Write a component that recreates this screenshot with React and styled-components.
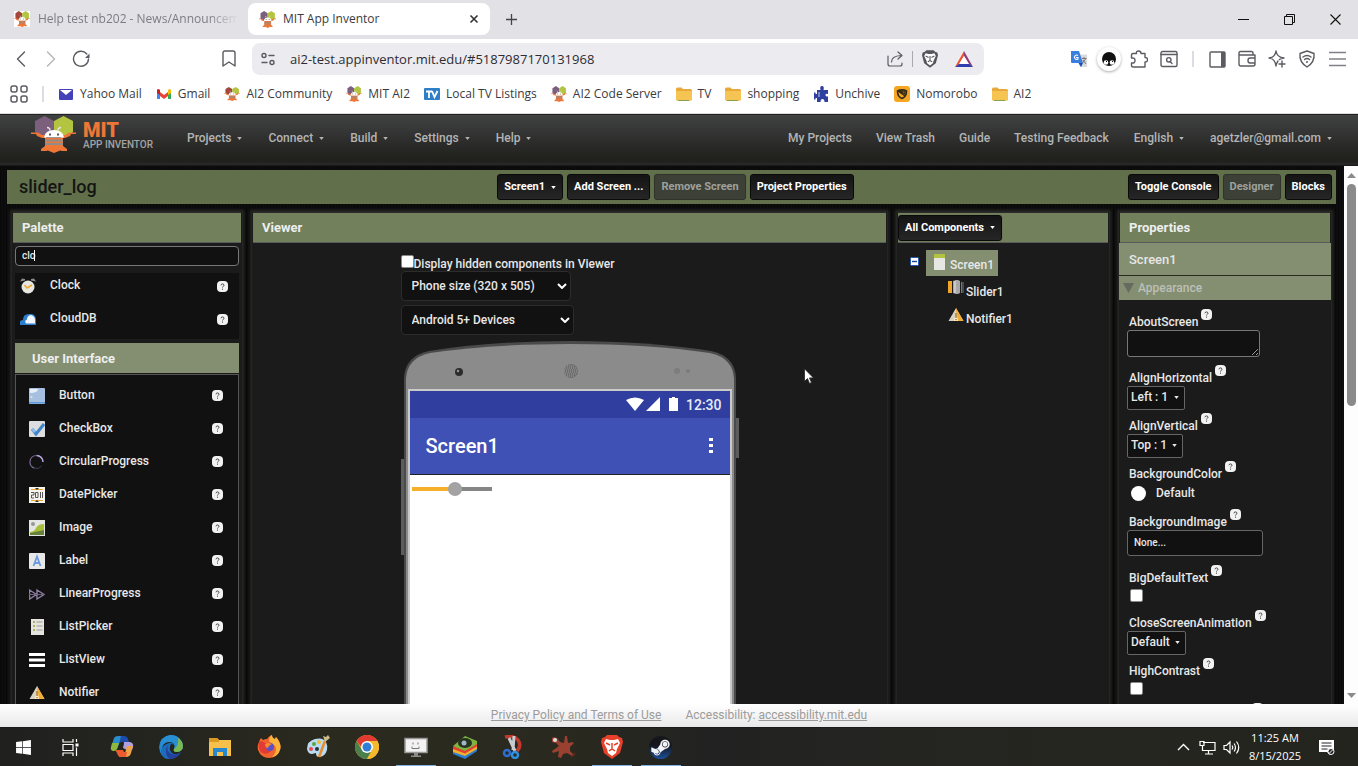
import React from "react";
import styled, { createGlobalStyle, css } from "styled-components";
import { FaWindows, FaSteamSymbol } from "react-icons/fa";

const ui = `"Open Sans", "Noto Sans", sans-serif`;
const app = `Roboto, "Liberation Sans", sans-serif`;

const Global = createGlobalStyle`
  * { box-sizing: border-box; }
  html, body, #root { height: 100%; }
  body { margin: 0; background: #0b0b0b; overflow: hidden; }
  svg { display: block; flex: none; }
  button { border: 0; margin: 0; padding: 0; background: none; font: inherit; color: inherit; white-space: nowrap; }
  a { color: inherit; text-decoration: none; white-space: nowrap; }
  input, select, textarea { margin: 0; font: inherit; color: inherit; }
`;

/* ---------- shared drawings ---------- */

const Svg = ({ w = 16, h = w, box = `0 0 ${w} ${h}`, children, ...rest }) => (
  <svg width={w} height={h} viewBox={box} fill="none" aria-hidden="true" {...rest}>{children}</svg>
);

const Caret = ({ size = 5 }) => (
  <Svg w={size} h={3} box="0 0 6 4"><path d="M0 0h6L3 4z" fill="currentColor" /></Svg>
);

const BeeIcon = ({ w = 18, h = w, boxed, wing = "#7c5f7c" }) => (
  <Svg w={w} h={h} box="0 0 45 37" preserveAspectRatio="none">
    {boxed && <path d="M0 0h45v37H0z" fill="#fff" />}
    <path d="M4 5l9.500-5L23 5v11l-5 4H9l-5-4z" fill={wing} />
    <path d="M23 5l9.500-5L42 5v11l-5 4h-9l-5-4z" fill="#b3c440" />
    <path d="M0 16.500h7l4 2.500h4v3h-4l-5-2-1-2H0zM45 16.500h-7L34 19h-4v3h4l5-2 1-2h5z" fill="#ee7636" />
    <path d="M14 22h18v8l4 3v2h-5q-2-1-3 0l-5 2-5-2q-1-1-3 0h-5v-2l4-3z" fill="#ee7636" />
    <path d="M14 24.500h18M14 28h18" stroke="#8d8d8d" strokeWidth="1.800" />
    <path d="M13 21.500q1-7.500 10-7.500t10 7.500z" fill="#fff" />
    <path d="M16 11.500q3 0 3 3M30 11.500q-3 0-3 3" stroke="#e6e6e6" strokeWidth="1.300" />
    <path d="M18 18.500h2M26 18.500h2" stroke="#555" strokeWidth="2" />
  </Svg>
);

const Help = () => (
  <Svg w={11} h={11} box="0 0 11 11">
    <rect x="0" y="0" width="11" height="11" rx="4" fill="#f2f2f2" />
    <path d="M4 4.300c0-1.900 3-1.800 3 0 0 1-1.400 1-1.500 2.200M5.500 7.600v1.100" stroke="#444" strokeWidth="1" />
  </Svg>
);

/* ---------- browser chrome ---------- */

const Window = styled.div`
  position: relative;
  display: flex;
  flex-direction: column;
  height: 100vh;
  min-height: 400px;
  font: 12px/16px ${ui};
`;

const TabStrip = styled.div`
  display: flex;
  align-items: flex-start;
  flex: none;
  height: 39px;
  padding-top: 3px;
  background: #e2e1e6;
  color: #3b3b40;
`;

const Tab = styled.div`
  display: flex;
  align-items: center;
  gap: ${p => (p.$active ? 7 : 8)}px;
  flex: none;
  width: ${p => (p.$active ? 242 : 234)}px;
  height: 32px;
  margin-left: ${p => (p.$active ? 8 : 6)}px;
  padding: 0 ${p => (p.$active ? 11 : 2)}px 0 ${p => (p.$active ? 11 : 8)}px;
  border-radius: 8px;
  background: ${p => (p.$active ? "#fff" : "transparent")};
  color: ${p => (p.$active ? "#3b3b40" : "#7c7c82")};
`;

const TabTitle = styled.span`
  flex: 1;
  overflow: hidden;
  white-space: nowrap;
  ${p => p.$fade && css`mask-image: linear-gradient(90deg, #000 85%, transparent);`}
`;

const NewTab = styled.button`
  display: grid;
  place-items: center;
  width: 42px;
  height: 32px;
`;

const WindowControls = styled.div`
  display: flex;
  margin-left: auto;
`;

const WindowButton = styled.button`
  display: grid;
  place-items: center;
  width: 46px;
  height: 32px;
`;

const NavBar = styled.div`
  display: flex;
  align-items: center;
  flex: none;
  height: 40px;
  padding: 0 6px;
  background: #fff;
  color: #5b5b62;
`;

const IconButton = styled.button`
  display: grid;
  place-items: center;
  flex: none;
  width: 30px;
  height: 30px;
  ${p => p.$raised && css`
    svg { box-sizing: content-box; padding: 5px; border-radius: 50%; box-shadow: 0 1px 3px #aaa; }
  `}
`;

const NavSpace = styled.span`
  flex: none;
  width: ${p => p.$w}px;
`;

const Address = styled.form`
  display: flex;
  align-items: center;
  flex: 1;
  height: 32px;
  margin-left: 8px;
  padding: 0 5px 0 8px;
  border-radius: 8px;
  background: #ecebf0;
`;

const AddressInput = styled.input`
  flex: 1;
  min-width: 0;
  padding: 0;
  margin-left: 14px;
  border: 0;
  outline: 0;
  background: none;
  color: #2c2c33;
  font-size: 13px;
`;

const Divider = styled.span`
  flex: none;
  width: ${p => (p.$thick ? 2 : 1)}px;
  height: 16px;
  margin: 0 ${p => p.$m}px;
  background: ${p => (p.$thick ? "#dcdce2" : "#a9a9b0")};
`;

const Bookmarks = styled.nav`
  display: flex;
  align-items: center;
  gap: 14px;
  flex: none;
  height: 35px;
  padding: 0 10px 5px;
  border-bottom: 1px solid #d9d9dc;
  background: #fff;
  color: #3b3b40;
`;

const Bookmark = styled.a`
  display: flex;
  align-items: center;
  gap: 6px;
`;

const Folder = () => (
  <Svg><path d="M0 3q0-1.500 1.500-1.500h4L7 3h7.500Q16 3 16 4.500V13q0 1.500-1.500 1.500h-13Q0 14.500 0 13z" fill="#e9a93a" /><path d="M0 5h16v8q0 1.500-1.500 1.500h-13Q0 14.500 0 13z" fill="#f6c453" /><path d="M2 14.500h11" stroke="#8aa14c" /></Svg>
);

const bookmarks = [
  ["Yahoo Mail", <Svg><rect x="1" y="3" width="14" height="11" rx="1" fill="#4340b8" /><path d="M2 4h12L8 9z" fill="#fff" /></Svg>],
  ["Gmail", <Svg><path d="M1 13V4l3 2v7z" fill="#4285f4" /><path d="M12 13V6l3-2v9z" fill="#34a853" /><path d="M4 6v4l4 3 4-3V6L8 9z" fill="#ea4335" /><path d="M1 4q1-2 3 0v5L1 7z" fill="#c5221f" /><path d="M15 4q-1-2-3 0v5l3-2z" fill="#fbbc04" /></Svg>],
  ["AI2 Community", <BeeIcon w={16} h={14} wing="#a3473c" />],
  ["MIT AI2", <BeeIcon w={16} />],
  ["Local TV Listings", <Svg><rect y="2" width="16" height="12" rx="1" fill="#2f7fc8" /><path d="M2 5.500h6M5 5.500V12M8 5l2.500 6L13.500 5" stroke="#fff" strokeWidth="1.800" /></Svg>],
  ["AI2 Code Server", <BeeIcon w={16} />],
  ["TV", <Folder />],
  ["shopping", <Folder />],
  ["Unchive", <Svg><path d="M4 4h3.500q-1-4 1.500-4t1.500 4H15v4q-2.500-1-2.500 1t2.500 1.500V16h-3.500q0-3-2-3t-2 3H4v-4H2.500v1.500H1V6.500h1.500V8H4z" fill="#2e3f9e" /><path d="M6 6v5" stroke="#8fa0e0" strokeWidth="1.500" /></Svg>],
  ["Nomorobo", <Svg><rect width="16" height="16" rx="3" fill="#f5a623" /><path d="M3.500 5q4.500-2.500 9 0 0 6-4.500 7.500Q3.500 11 3.500 5z" stroke="#332a16" strokeWidth="1.600" /><path d="M4 5l7 5M6 5h5v3z" stroke="#332a16" strokeWidth="1.300" /></Svg>],
  ["AI2", <Folder />],
];

/* ---------- App Inventor ---------- */

const AppHeader = styled.header`
  display: flex;
  align-items: center;
  flex: none;
  height: 52px;
  padding: 0 13px 5px 31px;
  background: linear-gradient(#404242, #20201d 44px, #20201d 47px, #2b2b29 49px, #161616);
  border-top: 1px solid #222;
  color: #b4b4b4;
  font: 500 12px/16px ${app};
`;

const Brand = styled.a`
  display: flex;
  align-items: center;
  align-self: flex-start;
  gap: 7px;
  margin: 1px 21px 0 0;
`;

const BrandText = styled.span`
  display: flex;
  flex-direction: column;
  font: 500 10px/10px ${app};
  color: #a3a3a3;
`;

const BrandName = styled.strong`
  font: 900 20px/20px ${app};
  color: #ee7636;
`;

const MenuButton = styled.button`
  display: flex;
  align-items: center;
  gap: 6px;
  padding: 0 13px;
`;

const HeaderLink = styled.a`
  padding: 0 12px;
`;

const Push = styled.span`
  margin-left: auto;
`;

const Body = styled.div`
  display: flex;
  flex: 1;
  min-height: 0;
`;

const Workspace = styled.main`
  display: flex;
  flex-direction: column;
  flex: 1;
  min-width: 0;
  padding: 4px 8px 0 7px;
  overflow: hidden;
  background: repeating-linear-gradient(90deg, #0006 0 1px, transparent 1px 3px), #0d0d0d;
  color: #e8e8e8;
  font: 500 12px/16px ${app};
`;

const ProjectBar = styled.div`
  display: grid;
  grid-template-columns: 1fr auto 1fr;
  align-items: center;
  flex: none;
  height: 34px;
  padding: 0 4px 0 12px;
  background: #61704a;
`;

const ProjectName = styled.h1`
  margin: 0;
  font: 500 18px/24px ${app};
  color: #141414;
`;

const ButtonGroup = styled.div`
  display: flex;
  gap: 4px;
  justify-content: flex-end;
`;

const ToolButton = styled.button`
  display: flex;
  align-items: center;
  gap: 6px;
  height: 26px;
  padding: 0 6px;
  border: 1px solid #0a0a0a;
  border-radius: 3px;
  background: linear-gradient(#141414, #262626);
  box-shadow: 0 0 1px #555;
  color: #fff;
  font: 700 11px/16px ${app};
  &:disabled { background: #3c4036; border-color: #2f332a; color: #9fa09c; }
`;

const Columns = styled.div`
  display: flex;
  gap: 10px;
  flex: 1;
  min-height: 0;
  padding: 8px 5px 0;
`;

const Panel = styled.section`
  display: flex;
  flex-direction: column;
  flex: ${p => (p.$width ? `0 0 ${p.$width}px` : "1 1 0")};
  min-width: 0;
  background: #1b1b1b;
  box-shadow: 0 0 3px 2px #2b2b29;
`;

const PanelHead = styled.h2`
  display: flex;
  align-items: center;
  flex: none;
  height: 31px;
  margin: 0 1px;
  padding: ${p => (p.$tight ? "0" : "0 9px")};
  background: #72805c;
  border-bottom: 1px solid #5a5a5a;
  border-top: 1px solid #2b2b29;
  color: #eee;
  font: 700 13px/16px ${app};
`;

/* palette */

const SearchBox = styled.label`
  position: relative;
  display: block;
  flex: none;
  margin: 3px 3px 7px;
`;

const SearchInput = styled.input`
  display: block;
  width: 100%;
  height: 20px;
  padding: 0 6px 2px;
  border: 1px solid #777;
  border-radius: 4px;
  background: #111;
  font-size: 10px;
  outline: 0;
`;

const TextCursor = styled.span`
  position: absolute;
  left: 19px;
  top: 4px;
  width: 1px;
  height: 11px;
  background: #fff;
`;

const ItemList = styled.ul`
  flex: none;
  margin: 0 3px;
  padding: 0;
  list-style: none;
  background: #111;
  ${p => p.$framed && css`
    margin-top: 1px;
    padding: 4px 4px 0 8px;
    border: 1px solid #555;
  `}
`;

const Item = styled.li`
  display: flex;
  align-items: center;
  height: 33px;
  padding: 0 11px 0 5px;
  ${p => !p.$indent && css`padding-bottom: 7px;`}
`;

const ItemName = styled.span`
  flex: 1;
  margin-left: 14px;
  padding-bottom: 2px;
`;

const HelpButton = styled.button`
  flex: none;
`;

const CategoryHead = styled.h3`
  display: flex;
  align-items: center;
  flex: none;
  height: 30px;
  margin: 4px 3px 0;
  padding: 2px 17px 0;
  background: #838f70;
  font: 700 13px/16px ${app};
  color: #eee;
`;

const results = [
  ["Clock", <Svg><path d="M0 3.500L2 .5 5 1v1.500zM16 3.500L14 .5l-3 .5v1.500z" fill="#8c8c8c" /><circle cx="8" cy="9" r="6.500" fill="#e8e6e0" /><path d="M4.500 7L7 10l5-3" stroke="#f0a531" strokeWidth="1.500" /></Svg>],
  ["CloudDB", <Svg><path d="M0 14v-3q0-2 3-2 0-6 6-6h3q4 1 4 6v5z" fill="#2b7fd0" /><path d="M6 12.500q-2-3 1-4 0-4 4-4.500 4 1 4 5v3.500z" fill="#f4f8fc" /></Svg>],
];

const components = [
  ["Button", <Svg><rect width="16" height="16" rx="1" fill="#a7c0e0" /><path d="M1 1h8q0 4-8 4z" fill="#e6eef8" /><path d="M0 14h16v1.500H0z" fill="#5b9bdc" /><circle cx="2.500" cy="9" r="1" fill="#dbe8f6" /></Svg>],
  ["CheckBox", <Svg><rect width="16" height="16" rx="1" fill="#dedede" /><path d="M3 8l4 5 8-10" stroke="#3f86c9" strokeWidth="3" /><path d="M3 8l3 3" stroke="#8ebbe8" strokeWidth="3" /></Svg>],
  ["CircularProgress", <Svg><path d="M7.500 1.500A6.500 6.500 0 0 1 14 8" stroke="#bba7e0" strokeWidth="1.500" /><path d="M7.500 1.500A6.500 6.500 0 0 0 5.500 14.200" stroke="#7c6c95" strokeWidth="1.200" /><path d="M5.500 14.200a6.500 6.500 0 0 0 7-2" stroke="#443c50" /></Svg>],
  ["DatePicker", <Svg><path d="M0 0h16v16H0z" fill="#f5f3ee" /><path d="M2 2.500h12M2 13.500h12" stroke="#f0a531" /><path d="M6 1h4L8 3zM6 15h4L8 13z" fill="#333" /><path d="M2 5.500h3V8H2.500v3H5M6.500 5.500h2.500v5H6.500zM11.500 5v6M13.500 5v6" stroke="#555" /></Svg>],
  ["Image", <Svg><path d="M0 0h16v16H0z" fill="#e4e6e4" /><circle cx="4" cy="4" r="2" fill="#999" /><path d="M1 12q4 0 6-4t8-4v11H1z" fill="#a9bf3a" /><path d="M1 13q5-1 14-3v5H1z" fill="#64803c" /></Svg>],
  ["Label", <Svg><rect width="16" height="16" rx="1" fill="#e8e8e8" /><path d="M4.500 13L8 3.500 11.500 13M5.700 10h4.600" stroke="#6b9be0" strokeWidth="1.800" /></Svg>],
  ["LinearProgress", <Svg><path d="M.5 4l7 4.500-7 4.500zM8 4l7 4.500L8 13z" stroke="#8d7d9e" strokeWidth="1.400" /><path d="M0 8.500h16" stroke="#6d6080" /></Svg>],
  ["ListPicker", <Svg><path d="M2 0h13v16H2z" fill="#e6e4df" /><path d="M4 3h2M4 7h2M4 11h2" stroke="#93a43a" strokeWidth="1.600" /><path d="M7.500 3h6M7.500 7h6M7.500 11h6" stroke="#999" /></Svg>],
  ["ListView", <Svg><path d="M0 2.500h16M0 8h16M0 13.500h16" stroke="#fff" strokeWidth="3" /></Svg>],
  ["Notifier", <Warning />],
];

function Warning() {
  return <Svg><path d="M8 1l7.500 13H.5z" fill="#d9d2c2" /><path d="M8 1l7.500 13H8z" fill="#f2ad35" /><path d="M8 4l2 10H6z" fill="#fff1cf" /><path d="M8 6v5M8 12v1.300" stroke="#8d5c18" strokeWidth="1.200" /></Svg>;
}

/* viewer */

const ViewerBody = styled.div`
  width: 338px;
  margin: 12px auto 0;
`;

const CheckRow = styled.label`
  display: flex;
  align-items: flex-start;
  height: 16px;
  line-height: 19px;
`;

const Check = styled.input.attrs({ type: "checkbox" })`
  flex: none;
  width: 13px;
  height: 13px;
  appearance: none;
  border: 1px solid #888;
  border-radius: 2px;
  background: #fff;
`;

const SelectWrap = styled.span`
  position: relative;
  display: block;
  width: ${p => (p.$width ? `${p.$width}px` : "max-content")};
  svg { position: absolute; right: ${p => (p.$small ? 6 : 4)}px; top: ${p => (p.$small ? 10 : 12)}px; pointer-events: none; }
`;

const SizeSelect = styled.select`
  display: block;
  appearance: none;
  width: 100%;
  height: 30px;
  margin-bottom: 4px;
  padding: 0 20px 0 10px;
  border: 1px solid #2c2c2c;
  border-radius: 4px;
  background: #111;
`;

const Phone = styled.div`
  position: relative;
  height: 600px;
  margin-top: 5px;
  padding: 49px 7px 0;
`;

const PhoneFrame = styled.svg`
  position: absolute;
  inset: 0;
`;

const PhoneScreen = styled.div`
  position: relative;
  height: 509px;
  border: 2px solid #cacaca;
  background: #fff;
`;

const StatusBar = styled.div`
  display: flex;
  align-items: center;
  justify-content: flex-end;
  gap: 1px;
  height: 27px;
  padding-right: 8px;
  background: #303f9f;
  color: #e8eaf6;
  font: 500 14px/20px ${app};
`;

const TitleBar = styled.div`
  display: flex;
  align-items: center;
  justify-content: space-between;
  height: 57px;
  padding: 0 16px;
  border-bottom: 1px solid #222;
  background: #3f51b5;
  color: #fff;
  font: 500 20px/24px ${app};
`;

const Slider = styled.input.attrs({ type: "range" })`
  display: block;
  appearance: none;
  width: 80px;
  height: 14px;
  margin: 7px 2px;
  background: linear-gradient(90deg, #f7ae2b 43px, #858585 43px) center / 100% 4px no-repeat;
  &::-webkit-slider-thumb {
    appearance: none;
    width: 14px;
    height: 14px;
    border-radius: 50%;
    background: #a3a3a3;
  }
`;

const Pointer = styled.div`
  position: absolute;
  left: 804px;
  top: 368px;
`;

/* component tree */

const Tree = styled.ul`
  margin: 0;
  padding: ${p => (p.$nested ? "0 0 0 46px" : "7px 0 0 13px")};
  list-style: none;
`;

const TreeRow = styled.li`
  display: flex;
  align-items: center;
  height: ${p => (p.$root ? 26 : 27)}px;
  gap: ${p => (p.$root ? 7 : 2)}px;
  padding: ${p => (p.$root ? 0 : "0 0 0 5px")};
  svg { margin-bottom: 3px; }
`;

const Node = styled.span`
  padding-top: ${p => (p.$selected ? 0 : 4)}px;
  ${p => p.$selected && css`
    display: flex;
    align-items: center;
    gap: 3px;
    height: 26px;
    padding: 0 4px 0 6px;
    background: #838f70;
    span { padding-top: 3px; }
  `}
`;

/* properties */

const PropTitle = styled.div`
  flex: none;
  height: 33px;
  padding: 9px 10px;
  border-bottom: 1px solid #262a20;
  background: #838f70;
  font-size: 13px;
  color: #e6e6e6;
`;

const PropGroup = styled.button`
  display: flex;
  align-items: center;
  gap: 4px;
  flex: none;
  height: 24px;
  margin-bottom: 6px;
  padding: 0 4px;
  background: #838f70;
  color: #bdbfb8;
`;

const Prop = styled.div`
  flex: none;
  padding: 0 0 ${p => p.$after || 0}px 8px;
`;

const PropLabel = styled.div`
  display: flex;
  align-items: flex-start;
  gap: 3px;
  height: 24px;
  padding: 3px 2px 0;
  label { margin-top: 4px; line-height: 18px; }
`;

const PropArea = styled.textarea`
  display: block;
  width: 133px;
  height: 27px;
  border: 1px solid #777;
  border-radius: 3px;
  background: #111;
`;

const PropInput = styled.input`
  display: block;
  width: 136px;
  height: 26px;
  padding: 0 6px 2px;
  border: 1px solid #666;
  border-radius: 3px;
  background: #111;
  font-size: 10px;
`;

const PropSelect = styled.select`
  display: block;
  appearance: none;
  height: 24px;
  padding: 0 15px 2px 3px;
  border: 1px solid #666;
  border-radius: 2px;
  background: #111;
`;

const PropCheckRow = styled.div`
  height: 21px;
  padding: 3px;
`;

const ColorButton = styled.button`
  display: flex;
  align-items: center;
  gap: 10px;
  height: 24px;
  padding: 0 4px 2px;
  &::before { content: ""; width: 15px; height: 15px; border-radius: 50%; background: #fff; }
`;

const PickSelect = ({ id, value }) => (
  <SelectWrap $small><PropSelect id={id}><option>{value}</option></PropSelect><Caret /></SelectWrap>
);

const Field = ({ id, name, after, children }) => (
  <Prop $after={after}>
    <PropLabel><label htmlFor={id}>{name}</label><HelpButton aria-label={`Help for ${name}`}><Help /></HelpButton></PropLabel>
    {children}
  </Prop>
);

/* scrollbar, footer, taskbar */

const Scrollbar = styled.div`
  display: flex;
  flex-direction: column;
  align-items: center;
  flex: none;
  width: 14px;
  padding: 7px 0 6px;
  background: #fdfdfd;
  color: #8a8a8a;
`;

const ScrollTrack = styled.div`
  flex: 1;
  width: 9px;
  margin: 6px 0 4px;
`;

const ScrollThumb = styled.div`
  height: 44%;
  border-radius: 5px;
  background: #8a8a8a;
`;

const Footer = styled.footer`
  display: flex;
  justify-content: center;
  gap: 24px;
  flex: none;
  height: 23px;
  padding-top: 3px;
  background: linear-gradient(#fff, #e9e9e9);
  color: #9b9b9b;
  font: 400 12px/16px ${app};
  a { text-decoration: underline; }
`;

const Taskbar = styled.div`
  display: flex;
  flex: none;
  height: 39px;
  background: linear-gradient(90deg, #20201f, #2a2a1f 25%, #29291f 42%, #222 52%, #262620 80%, #24241f);
  border-top: 1px solid #1a1a1a;
  color: #fff;
`;

const TaskButton = styled.button`
  display: grid;
  place-items: center;
  width: ${p => (p.$wide ? 49 : 47)}px;
  ${p => p.$open && css`
    background: linear-gradient(#83b3e3, #83b3e3) center bottom / 40px 1px no-repeat;
  `}
`;

const TrayButton = styled.button`
  display: grid;
  place-items: center;
  width: 24px;
`;

const Clock = styled.time`
  width: 54px;
  margin: 0 1px 0 5px;
  padding-top: 1px;
  font-size: 11px;
  line-height: 18px;
  text-align: center;
  white-space: nowrap;
`;

const apps = [
  ["Copilot", <Svg w={24}><path d="M4 3q1-2 4-2h5l-4 8-2 5H1L3 6z" fill="#2a8ccb" /><path d="M2 8h7l-2 6q-1 2-3 2H3q-3-1-2-4z" fill="#8db83f" /><path d="M11 1h3q3 0 4 3l1 3h-5q-3-1-5 2z" fill="#1c4dab" /><path d="M14 7h6q4 1 3 5l-1 3h-5l-4-2z" fill="#b2a0dd" /><path d="M17 11h6l-2 7q-1 4-5 4H9l3-4h3z" fill="#f0a24a" /><path d="M5 15h8l1 2h3l-1 5H11q-3 0-4-4z" fill="#ea5b2d" /><path d="M10 8h4l-2 7H8z" fill="#25251f" /></Svg>],
  ["Edge", <Svg w={24}><path d="M0 12Q1 1 12 0q8 0 11 8-3-4-9-4T6 8q-4 3-2 9l5 7Q1 22 0 12z" fill="#2187cf" /><path d="M2 6q4-6 10-6 11 1 12 11 0 6-7 6-4-1-2-3 2-6-4-7-6 0-9 5z" fill="#2a8fd2" /><path d="M19 3q5 3 5 9-1 5-7 5-4-1-2-3 5-3 4-11z" fill="#7cb850" /><path d="M10 8q4-1 5 3l-1 2q-2 4 3 5 3 1 5-1-4 7-12 7-8-1-8-8 1-6 8-8z" fill="#1b6dbb" /><path d="M9 10q-2 5 2 8 5 4 11-1-4 7-11 7Q7 22 7 16q0-4 2-6z" fill="#24409c" /><path d="M12 9q4 0 3 4-2 3 2 5 2 0 4-1-4 4-8 1-4-4-1-9z" fill="#25251f" /></Svg>],
  ["File Explorer", <Svg w={22}><path d="M0 2h8l2 2h12v16H0z" fill="#f6c04b" /><path d="M0 2h8l2 2v2H0z" fill="#dc9a22" /><path d="M4 12h14v8h-4v-4H8v4H4z" fill="#2787cf" /></Svg>],
  ["Firefox", <Svg w={24}><path d="M2 7q1-3 2-4l2 2q2-1 4-1 3-4 5-4 0 3 3 4l1-2q6 7 4 13-3 8-11 8T1 15q-1-4 1-8z" fill="#f0642d" /><path d="M15 0q0 3 3 4l1-2q6 7 4 13-2 6-8 7 6-6 3-11l-6-5q0-4 3-6z" fill="#fbb43a" /><path d="M2 7q3-2 6 1l4 1-3 3q0 4 5 4-4 5-10 1-3-4-2-10z" fill="#e33a35" /><circle cx="13" cy="12" r="4" fill="#5c50c4" /><path d="M8 9q3-2 7 0-4 2-4 4-3 0-3-4z" fill="#f68b2c" /></Svg>],
  ["Paint", <Svg w={24}><path d="M1 14Q1 6 9 4q8-2 11 3 2 4 1 8-2 7-8 7-3 0-3-4l-4 1q-4 0-5-5z" fill="#b9dcf0" /><circle cx="5" cy="14" r="2" fill="#e45" /><circle cx="8" cy="9" r="2" fill="#5aa646" /><circle cx="13" cy="7" r="2" fill="#f2bb31" /><circle cx="11" cy="14" r="2" fill="#26303a" /><path d="M13 22l6-16" stroke="#e98b2f" strokeWidth="2.500" /><path d="M17 1l3 1 2-2 2 3-5 4z" fill="#cbbb8a" /></Svg>],
  ["Chrome", <Svg w={24}><circle cx="12" cy="12" r="12" fill="#f5b92e" /><path d="M12 6h10.400A12 12 0 0 0 1.600 6L7 13z" fill="#e13a30" /><path d="M1.600 6A12 12 0 0 0 12 24l5-9H7z" fill="#4b7f4b" /><path d="M12 24l5.200-9V6h5.200A12 12 0 0 1 12 24z" fill="#f5b92e" /><circle cx="12" cy="12" r="6" fill="#fff" /><circle cx="12" cy="12" r="4.500" fill="#2f7fd4" /></Svg>],
  ["Desktop helper", <Svg w={24}><path d="M1 3.500h22v14H1z" fill="#f2f2f2" stroke="#999" strokeWidth="1.500" /><path d="M10 18h4v3h-4zM7 20.500h10v1.500H7z" fill="#8a8a8a" /><path d="M9 7.500v2M14 7.500v2M8 11.500v2h7v-2" stroke="#777" /></Svg>, true],
  ["BlueStacks", <Svg w={26} h={24} box="0 0 26 24"><path d="M1 16l12-4 12 1v3l-12 8L1 19z" fill="#2c7ed2" /><path d="M1 14l12-4 12 1v3l-12 7L1 17z" fill="#f0b12f" /><path d="M1 11.500l12-4 12 1v3l-12 7L1 14z" fill="#e5402e" /><path d="M1 11L13 1l12 5v3l-12 7z" fill="#7cb342" /><ellipse cx="13" cy="8" rx="7" ry="5" fill="#26331f" /><circle cx="12" cy="8" r="2.500" fill="#9fb8c8" /></Svg>],
  ["Snipping Tool", <Svg w={24}><path d="M3 2q9-2 13 3 4 6-1 11" stroke="#bf3a2c" strokeWidth="3.500" /><path d="M7 3l6 13M12 1l-1 14" stroke="#c9cdd0" strokeWidth="3" /><circle cx="5" cy="18" r="3" stroke="#2c6fd0" strokeWidth="2.500" /><circle cx="13" cy="20" r="3" stroke="#2f8fe0" strokeWidth="2.500" /></Svg>],
  ["Red creature", <Svg w={24}><path d="M1 3l2-1 3 1 3 4 4 1 1-7h2l1 7 4-1 2 1-4 4v4l3 3-1 2-5-3-4 1-2 4-3-1 1-6-6 2-1-2 7-5-3-3-4-1z" fill="#9a4030" /><circle cx="4" cy="5" r="2" fill="#ddd" /><path d="M20 21q4 0 3-3" stroke="#6a2a22" strokeWidth="1.500" /></Svg>],
  ["Brave", <Svg w={22} h={24} box="0 0 22 24"><path d="M6 0h10l2 2 3 1 1 4-3 11-8 6-8-6L0 7l1-4 3-1z" fill="#e8402a" /><path d="M5 4l4 1h4l4-1 2 4-3 6-1 4-4 3-4-3-1-4-3-6z" fill="#fff" /><path d="M5 8l4 2M17 8l-4 2M11 8v6M8 16l3-2 3 2" stroke="#e8402a" strokeWidth="1.500" /></Svg>, true],
  ["Steam", <SteamIcon />, true],
];

const SteamDisc = styled.span`
  display: grid;
  place-items: center;
  width: 23px;
  height: 23px;
  border-radius: 50%;
  background: linear-gradient(#14161c 40%, #1c4f9a);
  color: #f2f4f8;
  font-size: 21px;
`;

function SteamIcon() {
  return <SteamDisc><FaSteamSymbol /></SteamDisc>;
}

const line = { stroke: "currentColor", strokeWidth: 1.4, strokeLinecap: "round", strokeLinejoin: "round" };

export default function App() {
  return (
    <Window>
      <Global />
      <TabStrip>
        <Tab><BeeIcon w={16} boxed wing="#a3473c" /><TabTitle $fade>Help test nb202 - News/Announceme</TabTitle></Tab>
        <Tab $active>
          <BeeIcon w={17} />
          <TabTitle>MIT App Inventor</TabTitle>
          <button aria-label="Close tab"><Svg w={10}><path d="M1.500 1.500l7 7M8.500 1.500l-7 7" stroke="#333" strokeWidth="1.600" /></Svg></button>
        </Tab>
        <NewTab aria-label="New tab"><Svg w={11}><path d="M5.500 0v11M0 5.500h11" stroke="#444" strokeWidth="1.300" /></Svg></NewTab>
        <WindowControls>
          <WindowButton aria-label="Minimize"><Svg w={11}><path d="M0 5.500h11" stroke="#111" /></Svg></WindowButton>
          <WindowButton aria-label="Restore"><Svg w={11}><path d="M.5 2.500h8v8h-8zM2.500 2.500v-2h8v8h-2" stroke="#111" /></Svg></WindowButton>
          <WindowButton aria-label="Close"><Svg w={11}><path d="M.5.5l10 10M10.500.5l-10 10" stroke="#111" strokeWidth="1.100" /></Svg></WindowButton>
        </WindowControls>
      </TabStrip>

      <NavBar>
        <IconButton aria-label="Back"><Svg><path d="M11.500 1L4.500 8l7 7" {...line} /></Svg></IconButton>
        <IconButton aria-label="Forward"><Svg opacity=".45"><path d="M4.500 1l7 7-7 7" {...line} /></Svg></IconButton>
        <IconButton aria-label="Reload"><Svg w={18}><path d="M14.800 4A7.500 7.500 0 1 0 16.500 9" {...line} /><path d="M17.500 3.500V8H13z" fill="currentColor" /></Svg></IconButton>
        <NavSpace $w={118} />
        <IconButton aria-label="Bookmark this page"><Svg w={14} h={18} box="0 0 14 18"><path d="M1 3q0-2 2-2h8q2 0 2 2v13l-6-4-6 4z" {...line} /></Svg></IconButton>
        <Address>
          <Svg><circle cx="4" cy="4.500" r="2" {...line} /><path d="M9 4.500h5M2 11.500h5" {...line} /><circle cx="12" cy="11.500" r="2" {...line} /></Svg>
          <AddressInput aria-label="Address" defaultValue="ai2-test.appinventor.mit.edu/#5187987170131968" />
          <IconButton type="button" aria-label="Share"><Svg><path d="M1 5v8q0 2 2 2h10q2 0 2-2v-1M4.500 11q0-6 9.500-6.500M11 1l4 3.500L11 8" {...line} strokeWidth="1.200" /></Svg></IconButton>
          <Divider $m={2} />
          <IconButton type="button" aria-label="Shields"><Svg w={16} h={18} box="0 0 22 24"><path d="M6 0h10l2 2 3 1 1 4-3 11-8 6-8-6L0 7l1-4 3-1z" fill="#55555c" /><path d="M5 4l4 1h4l4-1 2 4-3 6-1 4-4 3-4-3-1-4-3-6z" fill="#fff" /><path d="M5 8l4 2M17 8l-4 2M11 8v6M8 16l3-2 3 2" stroke="#55555c" strokeWidth="1.500" /></Svg></IconButton>
          <NavSpace $w={4} />
          <IconButton type="button" aria-label="Rewards"><Svg w={18} h={16} box="0 0 18 16"><path d="M9 0L0 16l4-2.500L9 5z" fill="#f0542c" /><path d="M9 0l9 16-4-2.500L9 5z" fill="#943c76" /><path d="M0 16h18l-4-3H4z" fill="#2f3fae" /><path d="M9 5l5 8H4z" fill="#fff" /></Svg></IconButton>
        </Address>
        <NavSpace $w={80} />
        <IconButton aria-label="Translate"><Svg><path d="M6 3.500h10V16H9z" fill="#dadade" /><path d="M0 0h8l4 12H1q-1 0-1-1z" fill="#3a7fe0" /><path d="M7.500 12H12l-2 4z" fill="#1d4fb0" /><path d="M7 4.500A2.200 2.200 0 1 0 7 8V6.500H5" stroke="#fff" strokeWidth="1.100" /><path d="M11 7.500h4.500M13 6v1.500M11.500 12l3-4M12 9l3 4" stroke="#777" /></Svg></IconButton>
        <IconButton aria-label="Userscripts" $raised><Svg w={14}><rect width="14" height="14" rx="3" fill="#111" /><circle cx="4" cy="10.500" r="2.300" fill="#fff" /><circle cx="10" cy="10.500" r="2.300" fill="#fff" /><path d="M4 9.500h1M10 9.500h1" stroke="#111" /></Svg></IconButton>
        <IconButton aria-label="Extensions"><Svg w={18}><path d="M3 3.500h3.500Q6 1 8.500 1T11 3.500h4v4q2.500-.2 2.500 2.200T15 12v5H3q-1.500 0-1.500-1.500V13Q5 13.500 5 10.500T1.500 8V5Q1.500 3.500 3 3.500z" {...line} /></Svg></IconButton>
        <IconButton aria-label="Find"><Svg w={18}><rect x="1" y="1.500" width="16" height="15" rx="1.500" {...line} /><path d="M1 4.500h16M10 11.500l2 2" {...line} /><circle cx="8.800" cy="9.800" r="2.200" {...line} /></Svg></IconButton>
        <Divider $thick $m={8} />
        <IconButton aria-label="Side panel"><Svg w={17}><rect x="1" y="1" width="15" height="15" rx="1" {...line} /><path d="M12 1h4v15h-4z" fill="currentColor" /></Svg></IconButton>
        <IconButton aria-label="Wallet"><Svg w={18}><path d="M15 5V3q0-1.500-1.500-1.500h-11Q1 1.500 1 3v11q0 2 2 2h12q2 0 2-2V5H1M17 8h-5q-2 0-2 2.500t2 2.500h5" {...line} /></Svg></IconButton>
        <IconButton aria-label="Assistant"><Svg w={18}><path d="M8 1q1 6.500 8 7-3 .3-4.500 1.500M8 1q-1 6.500-7 7 6 .5 7 8 .5-3 2-5M14 11v6M11 14h6" {...line} /></Svg></IconButton>
        <IconButton aria-label="VPN"><Svg w={18}><path d="M9 1l7 2.500Q17 12 9 17 1 12 2 3.500z" {...line} /><path d="M5 7q4-3 8 0M6.500 9.500q2.500-2 5 0" {...line} /><circle cx="9" cy="12" r="1" fill="currentColor" /></Svg></IconButton>
        <IconButton aria-label="Menu"><Svg w={17}><path d="M0 1.500h17M0 8h17M0 14.500h17" stroke="#808086" strokeWidth="1.500" /></Svg></IconButton>
      </NavBar>

      <Bookmarks>
        <Svg w={18}><g stroke="#5b5b62" strokeWidth="1.500"><rect x="1" y="1" width="6" height="6" rx="2" /><rect x="11" y="1" width="6" height="6" rx="2" /><rect x="1" y="11" width="6" height="6" rx="2" /><rect x="11" y="11" width="6" height="6" rx="2" /></g></Svg>
        <Divider $thick $m={0} />
        {bookmarks.map(([name, icon]) => <Bookmark key={name} href="#">{icon}{name}</Bookmark>)}
      </Bookmarks>

      <AppHeader>
        <Brand href="#"><BeeIcon w={45} h={37} /><BrandText><BrandName>MIT</BrandName>APP INVENTOR</BrandText></Brand>
        {["Projects", "Connect", "Build", "Settings", "Help"].map(n => <MenuButton key={n}>{n}<Caret /></MenuButton>)}
        <Push />
        {["My Projects", "View Trash", "Guide", "Testing Feedback"].map(n => <HeaderLink key={n} href="#">{n}</HeaderLink>)}
        {["English", "agetzler@gmail.com"].map(n => <MenuButton key={n}>{n}<Caret /></MenuButton>)}
      </AppHeader>

      <Body>
        <Workspace>
          <ProjectBar>
            <ProjectName>slider_log</ProjectName>
            <ButtonGroup>
              <ToolButton>Screen1 <Caret /></ToolButton>
              <ToolButton>Add Screen ...</ToolButton>
              <ToolButton disabled>Remove Screen</ToolButton>
              <ToolButton>Project Properties</ToolButton>
            </ButtonGroup>
            <ButtonGroup>
              <ToolButton>Toggle Console</ToolButton>
              <ToolButton disabled>Designer</ToolButton>
              <ToolButton>Blocks</ToolButton>
            </ButtonGroup>
          </ProjectBar>

          <Columns>
            <Panel $width={230}>
              <PanelHead>Palette</PanelHead>
              <SearchBox><SearchInput aria-label="Search components" defaultValue="clo" /><TextCursor /></SearchBox>
              <ItemList>
                {results.map(([name, icon]) => (
                  <Item key={name}>{icon}<ItemName>{name}</ItemName><HelpButton aria-label={`Help for ${name}`}><Help /></HelpButton></Item>
                ))}
              </ItemList>
              <CategoryHead>User Interface</CategoryHead>
              <ItemList $framed>
                {components.map(([name, icon]) => (
                  <Item key={name} $indent>{icon}<ItemName>{name}</ItemName><HelpButton aria-label={`Help for ${name}`}><Help /></HelpButton></Item>
                ))}
              </ItemList>
            </Panel>

            <Panel>
              <PanelHead>Viewer</PanelHead>
              <ViewerBody>
                <CheckRow><Check />Display hidden components in Viewer</CheckRow>
                <SelectWrap $width={170}>
                  <SizeSelect aria-label="Screen size"><option>Phone size (320 x 505)</option></SizeSelect>
                  <Svg w={10} h={6}><path d="M1 1l4 4 4-4" stroke="#fff" strokeWidth="2" /></Svg>
                </SelectWrap>
                <SelectWrap $width={173}>
                  <SizeSelect aria-label="Device style"><option>Android 5+ Devices</option></SizeSelect>
                  <Svg w={10} h={6}><path d="M1 1l4 4 4-4" stroke="#fff" strokeWidth="2" /></Svg>
                </SelectWrap>
                <Phone>
                  <PhoneFrame width="338" height="600" viewBox="0 0 338 600" aria-hidden="true">
                    <path d="M0 119h4v96H0zM334 78h4v40h-4z" fill="#5c5c5c" />
                    <path d="M3 600V38Q4 16 28 11 90 1 169 1t141 10q24 5 25 27v562z" fill="#4a4a4a" />
                    <path d="M5 600V39Q6 18 29 13 90 4 169 4t140 9q23 5 24 26v561z" fill="#8b8b8b" />
                    <circle cx="58" cy="32" r="4" fill="#2c2c2c" /><circle cx="57" cy="31" r="1.200" fill="#999" />
                    <circle cx="170" cy="31" r="7" fill="#6e6e6e" />
                    <path d="M166 26h8M164 28h12M163 30h14M163 32h14M164 34h12M166 36h8" stroke="#999" strokeDasharray="1 1" />
                    <circle cx="276" cy="31" r="3" fill="#7d7d7d" /><circle cx="287" cy="31" r="2" fill="#7d7d7d" />
                  </PhoneFrame>
                  <PhoneScreen>
                    <StatusBar>
                      <Svg w={59} h={16} box="0 0 59 16"><path d="M0 3q9-5 18 0L9 14z" fill="#fff" /><path d="M34 0v14H20z" fill="#fff" /><path d="M43 1h3V0h3v1h3v13h-9z" fill="#fff" /></Svg>
                      12:30
                    </StatusBar>
                    <TitleBar>Screen1<Svg w={6} h={16} box="0 0 6 16"><path d="M1 0h4v3H1zM1 6h4v3H1zM1 12h4v3H1z" fill="#fff" /></Svg></TitleBar>
                    <Slider aria-label="Slider1" defaultValue={55} />
                  </PhoneScreen>
                </Phone>
              </ViewerBody>
            </Panel>

            <Panel $width={212}>
              <PanelHead $tight><ToolButton>All Components <Caret /></ToolButton></PanelHead>
              <Tree>
                <TreeRow $root>
                  <Svg w={9}><rect x=".5" y=".5" width="8" height="8" rx="1" fill="#fff" stroke="#2a56b8" /><path d="M2 4.500h5" stroke="#1d3f9a" strokeWidth="1.400" /></Svg>
                  <Node $selected>
                    <Svg w={15} h={16} box="0 0 15 16"><path d="M2 0h11v16H2z" fill="#e6e6e2" /><path d="M2 0h11v4H2z" fill="#b3c440" /></Svg>
                    <span>Screen1</span>
                  </Node>
                </TreeRow>
              </Tree>
              <Tree $nested>
                <TreeRow><Svg><path d="M0 1h4v12H0z" fill="#f2a52c" /><path d="M5 1l3-1h2l2 1v12l-2 1H8l-3-1z" fill="#a9a9a9" /><path d="M7 1v12" stroke="#e8e8e8" /><path d="M13 2h1.500v11H13zM15.500 2h.5v11h-.5z" fill="#777" /></Svg><Node>Slider1</Node></TreeRow>
                <TreeRow><Warning /><Node>Notifier1</Node></TreeRow>
              </Tree>
            </Panel>

            <Panel $width={212}>
              <PanelHead>Properties</PanelHead>
              <PropTitle>Screen1</PropTitle>
              <PropGroup><Svg w={11} h={10} box="0 0 11 10"><path d="M0 0h11L5.500 10z" fill="#666a60" /></Svg>Appearance</PropGroup>
              <Field id="about" name="AboutScreen" after={5}><PropArea id="about" /></Field>
              <Field id="ah" name="AlignHorizontal"><PickSelect id="ah" value="Left : 1" /></Field>
              <Field id="av" name="AlignVertical"><PickSelect id="av" value="Top : 1" /></Field>
              <Field id="bg" name="BackgroundColor"><ColorButton id="bg">Default</ColorButton></Field>
              <Field id="bi" name="BackgroundImage" after={6}><PropInput id="bi" defaultValue="None..." /></Field>
              <Field id="bt" name="BigDefaultText"><PropCheckRow><Check id="bt" /></PropCheckRow></Field>
              <Field id="cs" name="CloseScreenAnimation"><PickSelect id="cs" value="Default" /></Field>
              <Field id="hc" name="HighContrast"><PropCheckRow><Check id="hc" /></PropCheckRow></Field>
              <Field id="os" name="OpenScreenAnimation"><PickSelect id="os" value="Default" /></Field>
            </Panel>
          </Columns>
        </Workspace>
        <Scrollbar>
          <Svg w={9} h={5}><path d="M0 5h9L4.500 0z" fill="currentColor" /></Svg>
          <ScrollTrack><ScrollThumb /></ScrollTrack>
          <Svg w={9} h={5}><path d="M0 0h9L4.500 5z" fill="currentColor" /></Svg>
        </Scrollbar>
      </Body>

      <Footer>
        <a href="#">Privacy Policy and Terms of Use</a>
        <span>Accessibility: <a href="#">accessibility.mit.edu</a></span>
      </Footer>

      <Taskbar>
        <TaskButton aria-label="Start"><FaWindows size={17} /></TaskButton>
        <TaskButton aria-label="Task view"><Svg w={17}><path d="M1 0v3h10V0M1 17v-3h10v3M1 5.500h10v6H1zM14.500 0v3M14.500 8.500V17" stroke="#fff" strokeWidth="1.200" /><path d="M13.500 4.500h3v3h-3z" fill="#fff" /></Svg></TaskButton>
        <NavSpace $w={3} />
        {apps.map(([name, icon, open]) => <TaskButton key={name} aria-label={name} $wide $open={open}>{icon}</TaskButton>)}
        <Push />
        <TrayButton aria-label="Show hidden icons"><Svg w={13} h={8}><path d="M1 7l5.500-5.500L12 7" stroke="#fff" strokeWidth="1.400" /></Svg></TrayButton>
        <TrayButton aria-label="Network"><Svg w={17}><path d="M4 3.500h12v8H3.500V7M1 2.500h4v4H1zM9.500 12v3M6 15h8" stroke="#fff" strokeWidth="1.200" /></Svg></TrayButton>
        <TrayButton aria-label="Volume"><Svg w={17}><path d="M1 6.500h2.500L7 3v11l-3.500-3.500H1zM9 6.500q1.500 2 0 4M11 4.500q3 4 0 8M13.500 2.500q4.500 6 0 12" stroke="#fff" strokeWidth="1.200" /></Svg></TrayButton>
        <Clock>11:25 AM<br />8/15/2025</Clock>
        <TaskButton aria-label="Notifications"><Svg w={17}><path d="M1 1h15v12h-4v3l-3-3H1z" fill="#fff" /><path d="M3.500 4h10M3.500 7h10M3.500 10h6" stroke="#222" /><circle cx="13" cy="12.500" r="3" fill="#222" stroke="#fff" /><path d="M11 14.500l4-4" stroke="#fff" /></Svg></TaskButton>
        <NavSpace $w={8} />
      </Taskbar>

      <Pointer>
        <Svg w={11} h={17} box="0 0 11 17"><path d="M.5.8v12.500l3-2.700 2 4.800 2-.9-2-4.600h4z" fill="#fff" stroke="#222" strokeWidth=".8" /></Svg>
      </Pointer>
    </Window>
  );
}
